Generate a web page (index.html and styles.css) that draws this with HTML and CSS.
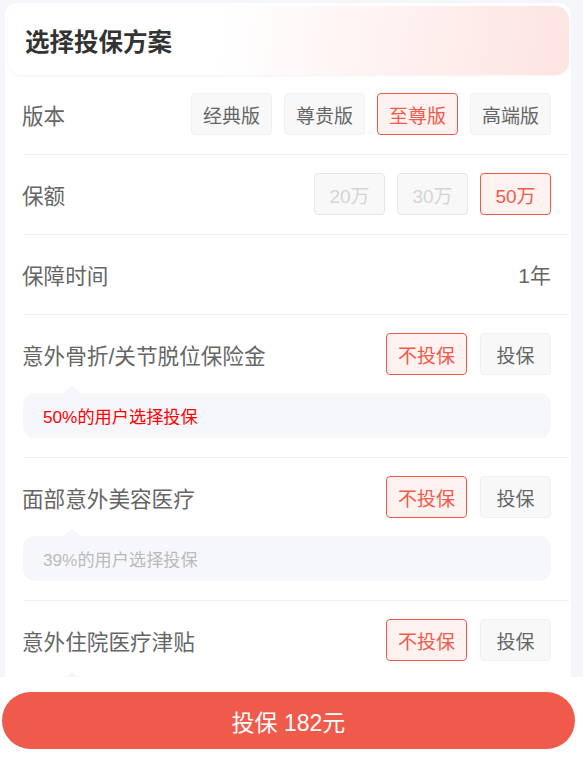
FILE: index.html
```html
<!DOCTYPE html>
<html lang="zh-CN">
<head>
<meta charset="UTF-8">
<title>选择投保方案</title>
<link rel="stylesheet" href="styles.css">
</head>
<body>

<div class="card">

<div class="head">
<h1>选择投保方案</h1>
</div>

<div class="row">
<div class="line">
<span class="label">版本</span>
<div class="opts">
<span class="opt">经典版</span>
<span class="opt">尊贵版</span>
<span class="opt on">至尊版</span>
<span class="opt">高端版</span>
</div>
</div>
</div>

<div class="row">
<div class="line">
<span class="label">保额</span>
<div class="opts">
<span class="opt small off">20万</span>
<span class="opt small off">30万</span>
<span class="opt small on">50万</span>
</div>
</div>
</div>

<div class="row">
<div class="line">
<span class="label">保障时间</span>
<span class="value">1年</span>
</div>
</div>

<div class="row">
<div class="line">
<span class="label">意外骨折/关节脱位保险金</span>
<div class="opts">
<span class="opt on">不投保</span>
<span class="opt short">投保</span>
</div>
</div>
<div class="tip hot">50%的用户选择投保</div>
</div>

<div class="row">
<div class="line">
<span class="label">面部意外美容医疗</span>
<div class="opts">
<span class="opt on">不投保</span>
<span class="opt short">投保</span>
</div>
</div>
<div class="tip">39%的用户选择投保</div>
</div>

<div class="row">
<div class="line">
<span class="label">意外住院医疗津贴</span>
<div class="opts">
<span class="opt on">不投保</span>
<span class="opt short">投保</span>
</div>
</div>
<div class="tip">42%的用户选择投保</div>
</div>

</div>

<div class="footer">
<button class="buy">投保 182元</button>
</div>

</body>
</html>
```

FILE: styles.css
```css
body{
margin:0;
padding:3px 12px 0 5px;
background:#f5f6fa;
font-family:"Liberation Sans","Noto Sans CJK SC",sans-serif;
color:#666;
}

.card{
background:#fff;
border-radius:12px;
padding:3px 2px 0 3px;
}

.head{
height:69px;
display:flex;
align-items:center;
padding-left:17px;
border-radius:14px;
background:linear-gradient(100deg,#fff 38%,#fde4e1 100%);
box-shadow:0 1px 3px rgba(0,0,0,0.05);
}

.head h1{
margin:0;
font-size:24.5px;
font-weight:bold;
color:#333;
}

.row{
margin-left:15px;
padding:18px 18px 19px 0;
border-bottom:1px solid #f0f0f2;
}

.line{
display:flex;
align-items:center;
justify-content:space-between;
min-height:42px;
}

.label{
margin-left:-1px;
font-size:21.6px;
color:#666;
}

.value{
font-size:21px;
color:#666;
}

.opts{
display:flex;
gap:12px;
}

.opt{
box-sizing:border-box;
width:81px;
height:42px;
display:flex;
align-items:center;
justify-content:center;
font-size:19px;
color:#666;
background:#f8f8f8;
border:1px solid #f1f1f1;
border-radius:4px;
}

.opt.small{
width:71px;
}

.opt.short{
width:71px;
margin-left:1px;
}

.opt.off{
color:#d4d4d4;
border-color:#e6e6e6;
}

.opt.on{
color:#f05a4a;
background:#fef2f1;
border-color:#f05a4a;
}

.tip{
position:relative;
margin-top:18px;
height:45px;
display:flex;
align-items:center;
padding-left:20px;
background:#f6f7fb;
border-radius:12px;
font-size:17.2px;
color:#bbb;
}

.tip:before{
content:"";
position:absolute;
left:40px;
top:-7px;
border-left:9px solid transparent;
border-right:9px solid transparent;
border-bottom:7px solid #f6f7fb;
}

.tip.hot{
color:#ff0000;
}

.footer{
position:fixed;
left:0;
right:0;
bottom:0;
height:84px;
background:#fff;
}

.buy{
display:block;
margin:15px 0 0 2px;
width:573px;
height:57px;
border:none;
border-radius:29px;
background:#f05a4a;
color:#fff;
font-family:"Liberation Sans","Noto Sans CJK SC",sans-serif;
font-size:23px;
}
```
